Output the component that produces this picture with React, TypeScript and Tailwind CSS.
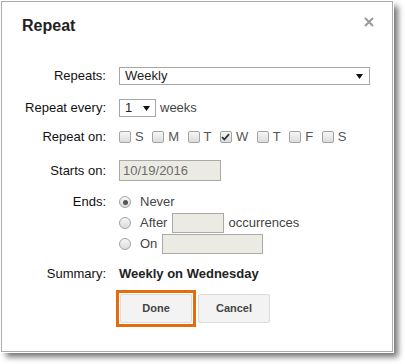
import React from 'react';

const days = [
    { label: 'S', checked: false },
    { label: 'M', checked: false },
    { label: 'T', checked: false },
    { label: 'W', checked: true },
    { label: 'T', checked: false },
    { label: 'F', checked: false },
    { label: 'S', checked: false },
];

const Arrow = () => (
    <svg width="7" height="5" viewBox="0 0 7 5" className="shrink-0">
        <polygon points="0,0 7,0 3.5,5" fill="#111" />
    </svg>
);

const Checkbox = ({ checked }: { checked: boolean }) => (
    <span className="w-[12px] h-[12px] rounded-[2px] border border-[#a3a3a3] bg-linear-to-b from-[#f7f7f7] to-[#dcdcdc] flex items-center justify-center">
        {checked && (
            <svg width="9" height="8" viewBox="0 0 9 8">
                <path d="M1 4.2 L3.4 6.5 L8 1.2" fill="none" stroke="#333" strokeWidth="1.8" />
            </svg>
        )}
    </span>
);

const Radio = ({ checked }: { checked?: boolean }) => (
    <span className="w-[12px] h-[12px] rounded-full border border-[#a3a3a3] bg-linear-to-b from-[#f7f7f7] to-[#dadada] flex items-center justify-center shrink-0">
        {checked && <span className="w-[5px] h-[5px] rounded-full bg-[#555]" />}
    </span>
);

const Label = ({ children }: { children: React.ReactNode }) => (
    <div className="w-[84px] shrink-0 text-right text-[13px] leading-[20px] text-[#111]">{children}</div>
);

export default function App() {
    return (
        <div className="w-[405px] h-[364px] bg-white pl-px pt-px font-['Liberation_Sans',Arial,sans-serif]">
            <div className="w-[392px] h-[351px] border border-[#ababab] bg-white shadow-[0_0_0_1px_#fff,5px_5px_6px_rgba(0,0,0,0.55)]">
                <div className="flex justify-between items-start pl-[20px] pr-[18px] pt-[14px]">
                    <h1 className="text-[16px] leading-[20px] font-bold text-[#222]">Repeat</h1>
                    <svg width="10" height="10" viewBox="0 0 10 10" className="mt-[1px]">
                        <path d="M1 1 L9 9 M9 1 L1 9" stroke="#9a9a9a" strokeWidth="2" />
                    </svg>
                </div>

                <div className="pl-[20px] mt-[29px]">
                    <div className="flex items-center h-[22px]">
                        <Label>Repeats:</Label>
                        <div className="ml-[13px] w-[251px] h-[18px] border border-[#a6a6a6] flex items-center justify-between pl-[5px] pr-[6px] text-[13px] text-[#222]">
                            <span>Weekly</span>
                            <Arrow />
                        </div>
                    </div>

                    <div className="flex items-center h-[22px] mt-[10px]">
                        <Label>Repeat every:</Label>
                        <div className="ml-[13px] w-[37px] h-[18px] border border-[#a6a6a6] flex items-center justify-between pl-[5px] pr-[5px] text-[13px] text-[#222]">
                            <span>1</span>
                            <Arrow />
                        </div>
                        <span className="ml-[4px] text-[13px] text-[#444]">weeks</span>
                    </div>

                    <div className="flex items-center h-[22px] mt-[7px]">
                        <Label>Repeat on:</Label>
                        <div className="ml-[13px] flex items-center gap-[8.5px]">
                            {days.map((d, i) => (
                                <label key={i} className="flex items-center gap-[4px] text-[13px] text-[#555]">
                                    <Checkbox checked={d.checked} />
                                    <span>{d.label}</span>
                                </label>
                            ))}
                        </div>
                    </div>

                    <div className="flex items-center h-[23px] mt-[11px]">
                        <Label>Starts on:</Label>
                        <div className="ml-[13px] w-[102px] h-[21px] border border-[#a9a9a9] bg-[#ebebe4] flex items-center pl-[3px] text-[13px] text-[#6d6d6d]">
                            10/19/2016
                        </div>
                    </div>

                    <div className="flex items-start mt-[10px]">
                        <Label>Ends:</Label>
                        <div className="ml-[13px] flex flex-col text-[13px] text-[#444]">
                            <div className="flex items-center h-[20px]">
                                <Radio checked />
                                <span className="ml-[9px]">Never</span>
                            </div>
                            <div className="flex items-center h-[21px]">
                                <Radio />
                                <span className="ml-[9px]">After</span>
                                <span className="ml-[5px] w-[52px] h-[20px] border border-[#a9a9a9] bg-[#ebebe4]" />
                                <span className="ml-[4px]">occurrences</span>
                            </div>
                            <div className="flex items-center h-[21px]">
                                <Radio />
                                <span className="ml-[9px]">On</span>
                                <span className="ml-[5px] w-[101px] h-[20px] border border-[#a9a9a9] bg-[#ebebe4]" />
                            </div>
                        </div>
                    </div>

                    <div className="flex items-center h-[20px] mt-[10px]">
                        <Label>Summary:</Label>
                        <span className="ml-[13px] text-[13px] font-bold text-[#222]">Weekly on Wednesday</span>
                    </div>

                    <div className="flex items-center mt-[6px] ml-[94px]">
                        <div className="border-[3px] border-[#e46c0a] p-px">
                            <button className="w-[72px] h-[29px] rounded-[2px] border border-[#dcdcdc] bg-[#f3f3f3] text-[11px] font-bold text-[#444]">
                                Done
                            </button>
                        </div>
                        <button className="ml-[2px] w-[72px] h-[29px] rounded-[2px] border border-[#dcdcdc] bg-[#f3f3f3] text-[11px] font-bold text-[#444]">
                            Cancel
                        </button>
                    </div>
                </div>
            </div>
        </div>
    );
}
